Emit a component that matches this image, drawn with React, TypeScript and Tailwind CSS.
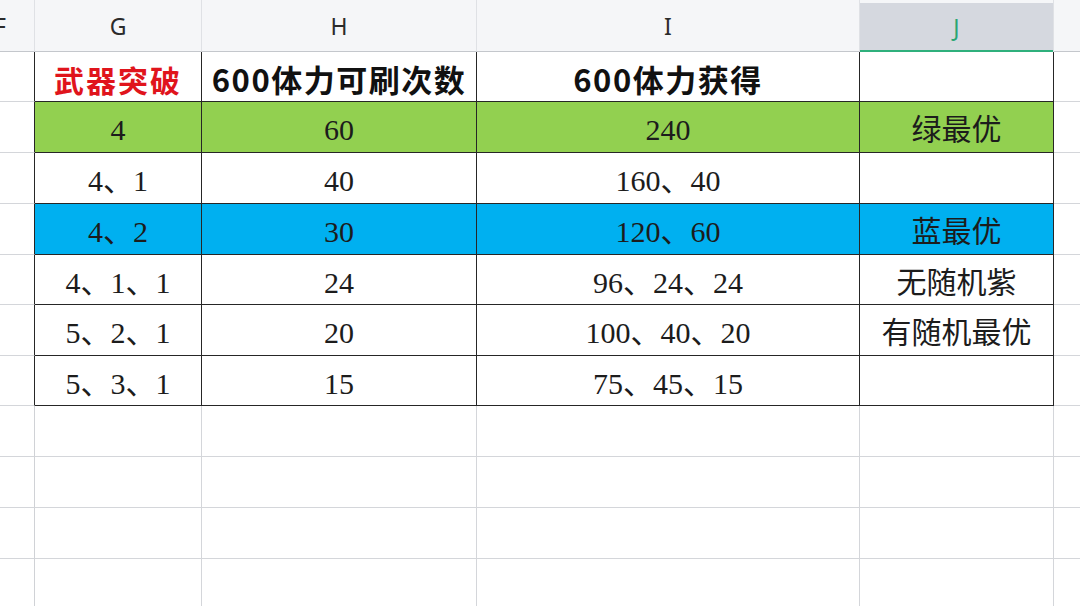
import React from "react";

type Row = { h: string; bg: string; cells: { t: string; cls?: string }[]; table: boolean };

const body = "font-['Liberation_Serif','Noto_Sans_CJK_SC',serif] text-[30px] text-[#1c1c1c]";
const bold = "font-['Noto_Sans_CJK_SC','Noto_Sans',sans-serif] font-bold text-[31px] tracking-[1.5px] text-[#111]";

const rows: Row[] = [
  {
    h: "h-[50px]",
    bg: "",
    table: true,
    cells: [
      { t: "武器突破", cls: "font-['Noto_Sans_CJK_SC',serif] font-bold text-[30px] text-[#e0141c] tracking-[2px]" },
      { t: "600体力可刷次数", cls: bold },
      { t: "600体力获得", cls: bold },
      { t: "" },
    ],
  },
  { h: "h-[51px]", bg: "bg-[#92d050]", table: true, cells: [{ t: "4" }, { t: "60" }, { t: "240" }, { t: "绿最优" }] },
  { h: "h-[51px]", bg: "", table: true, cells: [{ t: "4、1" }, { t: "40" }, { t: "160、40" }, { t: "" }] },
  { h: "h-[51px]", bg: "bg-[#00b0f0]", table: true, cells: [{ t: "4、2" }, { t: "30" }, { t: "120、60" }, { t: "蓝最优" }] },
  { h: "h-[50px]", bg: "", table: true, cells: [{ t: "4、1、1" }, { t: "24" }, { t: "96、24、24" }, { t: "无随机紫" }] },
  { h: "h-[51px]", bg: "", table: true, cells: [{ t: "5、2、1" }, { t: "20" }, { t: "100、40、20" }, { t: "有随机最优" }] },
  { h: "h-[50px]", bg: "", table: true, cells: [{ t: "5、3、1" }, { t: "15" }, { t: "75、45、15" }, { t: "" }] },
  { h: "h-[51px]", bg: "", table: false, cells: [{ t: "" }, { t: "" }, { t: "" }, { t: "" }] },
  { h: "h-[51px]", bg: "", table: false, cells: [{ t: "" }, { t: "" }, { t: "" }, { t: "" }] },
  { h: "h-[51px]", bg: "", table: false, cells: [{ t: "" }, { t: "" }, { t: "" }, { t: "" }] },
  { h: "h-[51px]", bg: "", table: false, cells: [{ t: "" }, { t: "" }, { t: "" }, { t: "" }] },
];

const widths = ["w-[167px]", "w-[275px]", "w-[383px]", "w-[194px]"];

function HeaderCell({ label, w, selected }: { label: string; w: string; selected?: boolean }) {
  if (selected) {
    return (
      <div className={`${w} h-[52px] shrink-0 pt-[3px] border-r border-[#dfe1e5] bg-[#f5f6f8]`}>
        <div className="h-full flex items-center justify-center bg-[#d5d8df] border-b-2 border-[#2fb07c] text-[#2aa673] text-[23px] font-['Noto_Sans',sans-serif] pt-[2px]">
          {label}
        </div>
      </div>
    );
  }
  return (
    <div
      className={`${w} h-[52px] shrink-0 flex items-center justify-center border-r border-b border-r-[#dfe1e5] border-b-[#c4c7cc] bg-[#f5f6f8] text-[#2b2b2b] text-[23px] font-['Noto_Sans',sans-serif] pt-[2px]`}
    >
      {label}
    </div>
  );
}

export default function App() {
  return (
    <div className="w-[1080px] h-[606px] overflow-hidden bg-white">
      <div className="flex">
        <div className="w-[35px] h-[52px] shrink-0 overflow-hidden flex items-center justify-end pr-[28px] border-r border-b border-r-[#dfe1e5] border-b-[#c4c7cc] bg-[#f5f6f8] text-[#2b2b2b] text-[23px] font-['Noto_Sans',sans-serif] pt-[2px]">
          F
        </div>
        <HeaderCell label="G" w={widths[0]} />
        <HeaderCell label="H" w={widths[1]} />
        <HeaderCell label="I" w={widths[2]} />
        <HeaderCell label="J" w={widths[3]} selected />
        <div className="flex-1 h-[52px] border-b border-[#c4c7cc] bg-[#f5f6f8]" />
      </div>
      {rows.map((r, i) => (
        <div key={i} className={`flex ${r.h}`}>
          <div
            className={`w-[35px] shrink-0 border-r border-b border-b-[#d4d6da] ${
              r.table ? "border-r-[#262626]" : "border-r-[#d0d2d6]"
            }`}
          />
          {r.cells.map((c, j) => (
            <div
              key={j}
              className={`${widths[j]} shrink-0 flex items-center justify-center pt-[5px] border-r border-b whitespace-nowrap ${r.bg} ${
                r.table ? "border-[#262626]" : "border-[#d4d6da]"
              } ${c.cls ?? body}`}
            >
              {c.t}
            </div>
          ))}
          <div className="flex-1 border-b border-[#d4d6da]" />
        </div>
      ))}
    </div>
  );
}
